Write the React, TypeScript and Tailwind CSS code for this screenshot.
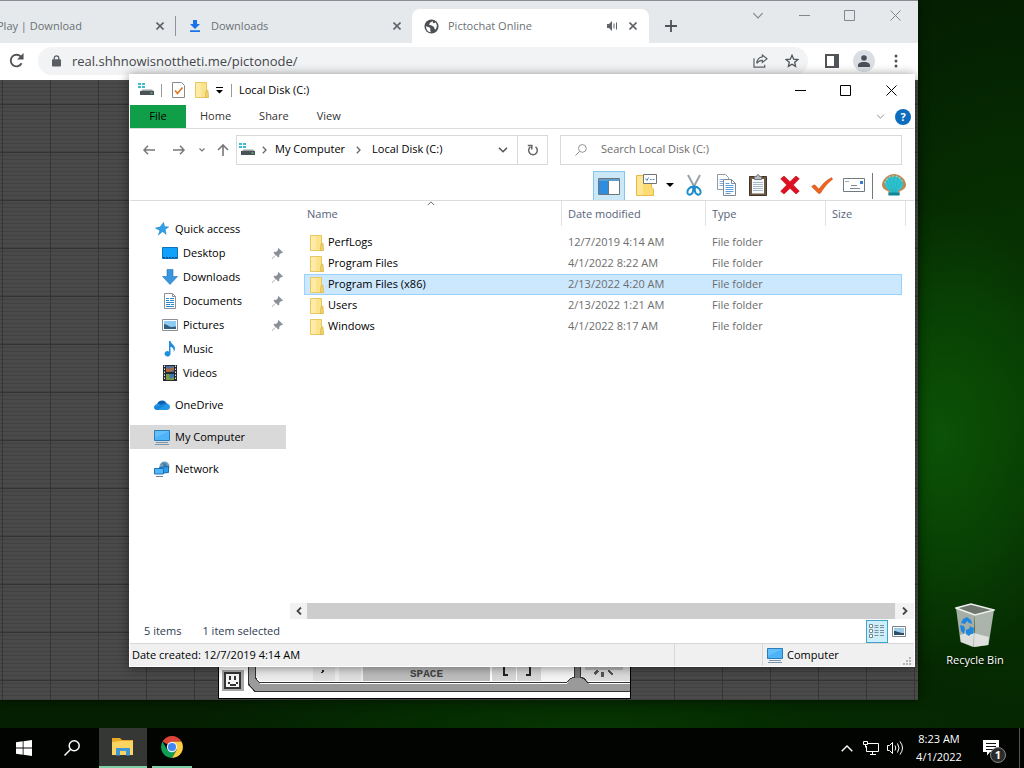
import { useState } from "react";
import type { ReactNode } from "react";

type IconProps = { className?: string };

/* ---------- small icons ---------- */

const CloseIcon = ({ className = "" }: IconProps) => (
  <svg viewBox="0 0 11 11" className={className} fill="none" stroke="currentColor">
    <path d="M.5.5l10 10M10.5.5l-10 10" />
  </svg>
);

const TabClose = () => (
  <svg viewBox="0 0 8 8" className="size-2" fill="none" stroke="#5f6368" strokeWidth="1.6">
    <path d="M.5.5l7 7M7.5.5l-7 7" />
  </svg>
);

const MinIcon = () => (
  <svg viewBox="0 0 11 11" className="size-[11px]" stroke="currentColor">
    <path d="M0 5.5h11" />
  </svg>
);

const MaxIcon = () => (
  <svg viewBox="0 0 11 11" className="size-[11px]" fill="none" stroke="currentColor">
    <path d="M.5.5h10v10H.5z" />
  </svg>
);

const Chevron = ({ className = "", d = "M1 1l4 4 4-4" }: { className?: string; d?: string }) => (
  <svg viewBox="0 0 10 6" className={className} fill="none" stroke="currentColor">
    <path d={d} />
  </svg>
);

const RightChevron = () => (
  <svg viewBox="0 0 5 8" className="h-2 w-[5px]" fill="none" stroke="#666" strokeWidth="1.3">
    <path d="M.8.8L4 4 .8 7.2" />
  </svg>
);

const DiskIcon = () => (
  <svg viewBox="0 0 16 14" className="h-[14px] w-4">
    <path fill="#3fbccb" d="M0 0h3v2H0zM4 0h3v2H4zM0 3h3v2H0zM4 3h3v2H4z" />
    <path fill="#9aa1a6" d="M3 8l1.500-1.500h9.500L15.500 8z" />
    <path fill="#4a5157" d="M2 8h14v4H2z" />
    <path fill="#6df08a" d="M12.500 9.500h2v1h-2z" />
  </svg>
);

const FolderIcon = () => (
  <svg viewBox="0 0 14 16" className="h-4 w-[14px] shrink-0">
    <path fill="#fbe38c" stroke="#e6c762" d="M.5.5h11v15H.5z" />
    <path fill="#ffeba6" d="M1 1h5v14H1z" />
    <path fill="#f3d56c" stroke="#dfbd52" d="M11 9l1.800-1 .7 7.500h-3z" />
  </svg>
);

const PinIcon = () => (
  <svg viewBox="0 0 11 11" className="size-[11px]" fill="#8a9097">
    <path d="M6.500 0L11 4.500 9.800 5.200 9 5 7.200 6.900 7.300 8.600 6.200 9.400 3.900 7.100.6 10.800 0 10.300 3.500 6.900 1.500 4.800 2.300 3.800 4.100 3.900 6 2 5.800 1.100z" />
  </svg>
);

const MonitorIcon = () => (
  <svg viewBox="0 0 16 16" className="size-4">
    <path fill="#4db5f7" stroke="#2a7dba" d="M.5 1.500h15v10H.5z" />
    <path fill="#7cccff" d="M1 2h14L1 9z" opacity=".5" />
    <path stroke="#7996ab" d="M2 13.500h12M1 15.500h14" />
  </svg>
);

const StarBlue = () => (
  <svg viewBox="0 0 14 14" className="size-[14px]">
    <path fill="#2ea1e8" stroke="#1a7fc4" strokeWidth=".6" d="M8.500.5l1 4.200 4.100.3-3.500 2.300 1 5-3.500-2.800-4.200 3.400L5 8.500.5 6l4.600-.9z" />
    <path stroke="#fff" strokeWidth=".7" d="M1 10.500h3M0 8.500h3" />
  </svg>
);

const DesktopIcon = () => (
  <svg viewBox="0 0 16 12" className="h-3 w-4">
    <path fill="#11a0fb" stroke="#0b74bf" d="M.5.5h15v11H.5z" />
    <path stroke="#0a4f86" d="M1 10.500h14" strokeDasharray="2 1" />
  </svg>
);

const DownIcon = () => (
  <svg viewBox="0 0 16 16" className="size-4">
    <path fill="#3a96dd" stroke="#2374b5" strokeWidth=".6" d="M5 .5h6v7h4.500L8 15.500.5 7.500H5z" />
  </svg>
);

const DocIcon = () => (
  <svg viewBox="0 0 12 16" className="h-4 w-3">
    <path fill="#fff" stroke="#8b9196" d="M.5.5h8l3 3v12H.5z" />
    <path fill="none" stroke="#8b9196" d="M8.500.5v3h3" />
    <path stroke="#2b8bd0" d="M2 5.500h3M6 5.500h4M2 7.500h3M6 7.500h4M2 9.500h8M2 11.500h4M7 11.500h3M2 13.500h8" />
  </svg>
);

const PictureIcon = () => (
  <svg viewBox="0 0 16 12" className="h-3 w-4">
    <path fill="#fff" stroke="#8b9196" d="M.5.5h15v11H.5z" />
    <path fill="#8fcdf2" d="M2 2h12v8H2z" />
    <path fill="#34617f" d="M2 5c3 0 4 2.500 7 3l5-.5V10H2z" />
  </svg>
);

const MusicIcon = () => (
  <svg viewBox="0 0 12 16" className="h-4 w-3">
    <path fill="#1f8fdd" d="M5 0h1.500c.5 3 4.500 4 4.500 7.500 0 1.500-.6 2.600-1.300 3.300.4-3-1-4.300-3.200-5V13a3 2.600 0 11-1.500-2.400z" />
  </svg>
);

const VideoIcon = () => (
  <svg viewBox="0 0 14 16" className="h-4 w-[14px]">
    <path fill="#262a30" d="M0 0h14v16H0z" />
    <path fill="#4d6fa0" d="M3 1h8v6H3z" />
    <path fill="#b46b37" d="M3 3l4 1 4-2v3l-5 2H3z" />
    <path fill="#7a9d3d" d="M3 9h8v6H3z" />
    <path fill="#3b78b8" d="M6 9h5v3l-4 2z" />
    <path stroke="#e8e8e8" strokeDasharray="1.500 1.500" d="M1.500 .5v15M12.500 .5v15" />
  </svg>
);

const CloudIcon = () => (
  <svg viewBox="0 0 16 10" className="h-[10px] w-4">
    <path fill="#0f5fb4" d="M3 4.500C3.500 1.800 6 .3 8.500.4c2 .1 3.300 1.300 4 3L8 8z" />
    <path fill="#2498e8" d="M2.800 10C-.8 9.800-.8 4.800 2.800 4c2-.4 3 .3 4.200 1.100l4-1.600c3.500-.6 5 1.500 5 3.500S14.500 10 12.800 10z" />
    <path fill="#1379d0" d="M7 5.100l4-1.600c1-.3 2-.1 2.600.2L3.500 10C1 9.800 0 8.500 0 7z" opacity=".55" />
  </svg>
);

const NetworkIcon = () => (
  <svg viewBox="0 0 16 16" className="size-4">
    <circle cx="10.500" cy="5.500" r="5" fill="#6e9fc2" />
    <path fill="#497e9f" d="M8 1.500l4 1 2 4-3 3z" />
    <path fill="#2f9bea" stroke="#186ba9" d="M5.500 6.500l9-1v6l-9 1z" />
    <path fill="#51b7fa" stroke="#1c74b6" d="M.5 7.500h9v5.500h-9z" />
    <path stroke="#6c8595" d="M2 15.500h7" />
  </svg>
);

/* ---------- explorer toolbar icons ---------- */

const PaneIcon = () => (
  <svg viewBox="0 0 22 17" className="h-[17px] w-[22px]">
    <path fill="#fff" stroke="#6c747c" d="M.5.5h21v16H.5z" />
    <path fill="#5f9fd0" d="M1 1h20v2H1z" />
    <path fill="#2f8de0" d="M1 3h9v13H1z" />
    <path stroke="#6c747c" d="M10.500 3v13" />
  </svg>
);

const FolderCardIcon = () => (
  <svg viewBox="0 0 22 22" className="size-[22px]">
    <path fill="#fbdb72" stroke="#e5bb45" d="M1.500 1.500h15v12l2 1.500v6.500h-17z" />
    <path fill="#ffe694" d="M2 2h6v19H2z" />
    <path fill="#fff" stroke="#6d747a" d="M8.500.5h13v9h-13z" />
    <path fill="none" stroke="#4886c8" d="M10.500 4.500l1.500 2 1.500-3M15 5.500h1.500M17.500 5.500h2" />
  </svg>
);

const ScissorsIcon = () => (
  <svg viewBox="0 0 16 22" className="h-[22px] w-4" fill="none">
    <path stroke="#9ba3aa" strokeWidth="2" d="M2 1l7.500 14M14 1L6.500 15" />
    <path stroke="#1b8ecb" strokeWidth="2" d="M7.500 12.500C3 13 1 16 1.500 19c1 3 5 1.500 5.500-1.500zM8.500 12.500c4.500.5 6.500 3.500 6 6.500-1 3-5 1.500-5.500-1.500z" />
  </svg>
);

const CopyIcon = () => (
  <svg viewBox="0 0 19 22" className="h-[22px] w-[19px]">
    <path fill="#fff" stroke="#8f9ba6" d="M.5.5h8l3 3v12H.5z" />
    <path stroke="#7fb0dc" d="M2.500 5.500h6M2.500 7.500h6M2.500 9.500h6M2.500 11.500h6" />
    <path fill="#fff" stroke="#7d8a96" d="M6.500 5.500h8l4 4v12h-12z" />
    <path fill="none" stroke="#7d8a96" d="M14.500 5.500v4h4" />
    <path stroke="#5b9fdc" d="M8.500 9.500h4M8.500 11.500h8M8.500 13.500h8M8.500 15.500h8M8.500 17.500h8M8.500 19.500h5" />
  </svg>
);

const ClipboardIcon = () => (
  <svg viewBox="0 0 18 22" className="h-[22px] w-[18px]">
    <path fill="#6d563f" stroke="#3f3427" d="M.5 2.500h17v19H.5z" />
    <path fill="#f7fafc" d="M3 5h12v14.500H3z" />
    <path stroke="#a9bac8" d="M4 8.500h10M4 10.500h10M4 12.500h10M4 14.500h10M4 16.500h10" />
    <path fill="#b9bec2" stroke="#6f757a" d="M5.500 2.500h2c0-2.500 3-2.500 3 0h2v3h-7z" />
  </svg>
);

const DeleteIcon = () => (
  <svg viewBox="0 0 20 20" className="size-5">
    <path fill="#dd1122" stroke="#b30d1a" strokeWidth=".6" d="M4 1l6 5.700L16 1l3.300 2.800L13.300 10l6 6.200L16 19l-6-5.700L4 19 .7 16.200l6-6.200-6-6.200z" />
  </svg>
);

const CheckIcon = () => (
  <svg viewBox="0 0 22 17" className="h-[17px] w-[22px]">
    <path fill="#f0641e" stroke="#c94a12" strokeWidth=".7" d="M.7 9.500L3.500 7.800 8 12.300C11 7.500 15 3.500 20.500.7l1 1.500C16.500 6 12.500 10.800 9.300 16.300H7.500z" />
  </svg>
);

const MailIcon = () => (
  <svg viewBox="0 0 22 15" className="h-[15px] w-[22px]">
    <path fill="#fff" stroke="#6e7a84" d="M.5.5h21v13H.5z" />
    <path fill="#2f7fd0" d="M17 3h3v3h-3z" />
    <path stroke="#a1abb3" d="M2 3.500h4" />
    <path stroke="#7c8892" d="M8 7.500h6M7 10.500h10" />
  </svg>
);

const ShellIcon = () => (
  <svg viewBox="0 0 24 22" className="h-[22px] w-6">
    <path fill="#b98a55" d="M12 0c3 0 5 1 7 2.500 3 2 5 5 5 8.500 0 2-1.500 4-3.500 5l-3 1.500v3.500h-11v-3.500l-3-1.500C1.500 15 0 13 0 11c0-3.500 2-6.500 5-8.500C7 1 9 0 12 0z" />
    <path fill="#2ec3cf" d="M12 2.500c5 0 9 3.500 9 8 0 3-3 5-5 6.500V20H8v-3c-2-1.500-5-3.500-5-6.500 0-4.500 4-8 9-8z" />
    <path fill="none" stroke="#22a9b8" strokeWidth=".6" d="M12 3v16M8 4l3 15M16 4l-3 15M4.500 7L10 18M19.500 7L14 18" />
    <path fill="none" stroke="#8be9ec" strokeWidth="1.200" strokeDasharray="1.500 2" d="M3 9c1-4 5-7 9-7s8 3 9 7" />
    <path fill="#0e8598" d="M6.500 18.500h11v3h-11z" />
  </svg>
);

/* ---------- browser window ---------- */

function WindowButtons({ dark }: { dark?: boolean }) {
  return (
    <div className={dark ? "ml-auto flex h-[30px] text-black" : "flex h-[28px] text-[#80868b]"}>
      <button aria-label="Minimize" className="grid w-[46px] place-items-center"><MinIcon /></button>
      <button aria-label="Maximize" className="grid w-[45px] place-items-center"><MaxIcon /></button>
      <button aria-label="Close" className="grid w-[46px] place-items-center"><CloseIcon className="size-[11px]" /></button>
    </div>
  );
}

function PictoKeyboard() {
  return (
    <div className="absolute bottom-px left-[218px] h-[60px] w-[413px] border border-black bg-white">
      <svg viewBox="0 0 411 34" className="absolute bottom-0 left-0 h-[34px] w-[411px]" shapeRendering="crispEdges">
        <path fill="#9a9a9a" d="M29 0h8v16l5 4h312l6-5 3 0 5 5h43v7H34l-5-5z" />
        <path fill="#ececec" d="M37 0h108v17H41l-4-4z" />
        <path fill="#dedede" d="M94 0h22v17H94zM120 0h22v17h-22z" />
        <path fill="#bdbdbd" d="M144 0h127v17H144z" />
        <path fill="#d7d7d7" d="M273 0h24v17h-24zM298 0h24v17h-24z" />
        <path fill="#f4f4f4" d="M322 0h32v14l-5 5h-27z" />
        <path fill="#dcdcdc" d="M362 0h49v17h-44l-5-5z" />
        <path fill="#b8b8b8" d="M366 0h38v6h-38z" />
        <path fill="#fff" d="M271 0h2v17h-2z" />
        <path fill="#9a9a9a" d="M348 20l3-5 4-2h9l4 3 2 4z" />
        <path fill="#777" d="M355 0h6v14h-6z" />
        <path fill="none" stroke="#333" d="M29.500 0v20l6 7H411M36.500 0v14l4 4.500h307l4-4 3.500-1V0M361.500 0v13l4 2 3 3.500H411" />
        <path fill="#222" d="M284 0h2v10h3v2h-5zM310 0h2v12h-5v-2h3zM104 0h1v2h-1zM103 6h2v2h-2zM102 8h2v1h-2z" />
        <path fill="#555" d="M374 9l4-3 2 1-4 4zM382 8h3v5h-3zM388 7l2-1 5 4-2 1z" />
        <path fill="#a8a8a8" d="M3 6h22v21H3z" />
        <path fill="#f5f5f5" stroke="#333" strokeWidth="2" d="M6 9h15v15H6z" />
        <path fill="#333" d="M10 12h2v4h-2zM15 12h2v4h-2zM9 18h2v2h6v-2h2v2h-2v2h-6v-2H9z" />
      </svg>
      <span className="absolute bottom-[17px] left-[191px] font-['Liberation_Mono',monospace] text-[11px] leading-[14px] font-bold text-[#444]">SPACE</span>
    </div>
  );
}

function Browser() {
  const [url, setUrl] = useState("real.shhnowisnottheti.me/pictonode/");
  return (
    <section className="absolute top-0 right-[106px] bottom-[28px] left-0 flex flex-col overflow-hidden border-t border-[#8d8b94] bg-white shadow-[0_0_8px_rgba(0,0,0,0.5)]">
      <div className="flex h-[42px] shrink-0 bg-[#e5e9ec] text-[#6b7075]">
        {/* first tab runs off the left side of the screen */}
        <div className="mt-[15px] mb-[7px] flex w-[176px] items-center border-r border-[#909498]">
          <span className="-ml-[3px] flex-1 whitespace-nowrap">Play | Download</span>
          <button aria-label="Close tab" className="mr-[11px]"><TabClose /></button>
        </div>
        <div className="mt-[15px] mb-[7px] flex w-[236px] items-center pl-[14px]">
          <svg viewBox="0 0 10 12" className="mr-[11px] h-3 w-[10px]" fill="#1a73e8">
            <path d="M3 0h4v4h3L5 9 0 4h3zM0 10.300h10V12H0z" />
          </svg>
          <span className="flex-1">Downloads</span>
          <button aria-label="Close tab" className="mr-[11px]"><TabClose /></button>
        </div>
        <div className="mt-2 flex w-[237px] items-center rounded-t-lg bg-white pl-3">
          <svg viewBox="0 0 16 16" className="mr-[9px] size-[15px]">
            <circle cx="8" cy="8" r="7.500" fill="#4c4f54" />
            <path fill="#fff" d="M2.200 7.500c1.500 1.500 3 .5 4.300 2 1 1.200-.5 2 .5 3.500l.3 1.200C4.300 14 2 11.500 2.200 7.500zM9 2.200c-1 .5-1 1.500-2.500 1.800-.8.300-.3 1.500-1 2.200.8 1 2.500.3 3.500 1.300s2 .5 2 2.500l1 1.500c2.500-2.500 2-6.500 0-8-.5.800-1.500 1.300-2.300.8z" />
          </svg>
          <span className="flex-1">Pictochat Online</span>
          <svg viewBox="0 0 11 10" className="mr-[11px] h-[10px] w-[11px]" fill="#5f6368">
            <path d="M0 3h2l3-3v10L2 7H0zM6.500 2.500h1v5h-1zM9 1.500h1v7H9z" />
          </svg>
          <button aria-label="Close tab" className="mr-[12px]"><TabClose /></button>
        </div>
        <button aria-label="New tab" className="mt-2 ml-4">
          <svg viewBox="0 0 12 12" className="size-3" stroke="#4f5358" strokeWidth="1.800"><path d="M6 0v12M0 6h12" /></svg>
        </button>
        <button aria-label="Search tabs" className="ml-auto grid h-[28px] w-[46px] place-items-center text-[#80868b]">
          <Chevron className="h-[7px] w-3" />
        </button>
        <WindowButtons />
      </div>

      <div className="flex h-[37px] shrink-0 items-center bg-white pr-[6px] pb-[2px] text-[#5f6368]">
        <button aria-label="Reload" className="grid w-[32px] place-items-center">
          <svg viewBox="0 0 16 16" className="size-[15px]" fill="none" stroke="#505459" strokeWidth="2">
            <path d="M13.500 11A6.200 6.200 0 1113 4.300" />
            <path fill="#505459" stroke="none" d="M15.500 0v7H8.500z" />
          </svg>
        </button>
        <div className="ml-[6px] flex h-7 flex-1 items-center rounded-full bg-[#f1f3f4] pl-[14px]">
          <svg viewBox="0 0 10 13" className="mr-[11px] h-3 w-[9px]">
            <path fill="none" stroke="#5a5d62" strokeWidth="1.400" d="M2.500 5V3.200a2.500 2.500 0 015 0V5" />
            <rect y="4.500" width="10" height="8" rx="1" fill="#5a5d62" />
          </svg>
          <input
            aria-label="Address"
            value={url}
            onChange={(e) => setUrl(e.target.value)}
            className="min-w-0 flex-1 bg-transparent text-[13px] leading-5 text-[#44474b] outline-none"
          />
          <button aria-label="Share" className="grid w-8 place-items-center">
            <svg viewBox="0 0 16 15" className="h-[14px] w-[15px]" fill="none" stroke="#5f6368" strokeWidth="1.300">
              <path d="M1 4.500V14h11.500v-2.500M10 1l5 4-5 4V6.800C7 6.800 5.300 8 4 10c.3-4 2.500-6.500 6-7z" />
            </svg>
          </button>
          <button aria-label="Bookmark" className="grid w-8 place-items-center">
            <svg viewBox="0 0 16 16" className="size-[14px]" fill="none" stroke="#505459" strokeWidth="1.500">
              <path d="M8 1.500l1.900 4.400 4.800.4-3.600 3.200 1 4.700L8 11.700l-4.100 2.500 1-4.700L1.300 6.300l4.800-.4z" />
            </svg>
          </button>
        </div>
        <button aria-label="Side panel" className="ml-2 grid w-8 place-items-center">
          <svg viewBox="0 0 14 14" className="size-[14px]"><path fill="none" stroke="#505459" strokeWidth="2" d="M1 1h12v12H1z" /><path fill="#505459" d="M9 0h5v14H9z" /></svg>
        </button>
        <button aria-label="Profile" className="mx-[5px] grid size-[22px] place-items-center rounded-full bg-[#dadfe6]">
          <svg viewBox="0 0 12 12" className="size-3" fill="#4b4f57"><circle cx="6" cy="3" r="2.800" /><path d="M0 12V9.500C1 7.500 3.500 7 6 7s5 .5 6 2.500V12z" /></svg>
        </button>
        <button aria-label="Menu" className="grid w-8 place-items-center">
          <svg viewBox="0 0 4 14" className="h-[14px] w-1" fill="#505459"><circle cx="2" cy="2" r="1.500" /><circle cx="2" cy="7" r="1.500" /><circle cx="2" cy="12" r="1.500" /></svg>
        </button>
      </div>

      {/* page: dark grid with the chat keyboard at the bottom */}
      <div className="relative flex-1 bg-[#4a4a4a] bg-[repeating-linear-gradient(90deg,transparent_0_2px,#363636_2px_3px,transparent_3px_48px),repeating-linear-gradient(180deg,transparent_0_24px,#333_24px_25px,transparent_25px_48px),repeating-linear-gradient(180deg,transparent_0_3px,#414141_3px_4px)]">
        <PictoKeyboard />
      </div>
    </section>
  );
}

/* ---------- explorer window ---------- */

const quickItems: { label: string; icon: ReactNode; pinned?: boolean }[] = [
  { label: "Desktop", icon: <DesktopIcon />, pinned: true },
  { label: "Downloads", icon: <DownIcon />, pinned: true },
  { label: "Documents", icon: <DocIcon />, pinned: true },
  { label: "Pictures", icon: <PictureIcon />, pinned: true },
  { label: "Music", icon: <MusicIcon /> },
  { label: "Videos", icon: <VideoIcon /> },
];

const files = [
  { name: "PerfLogs", date: "12/7/2019 4:14 AM" },
  { name: "Program Files", date: "4/1/2022 8:22 AM" },
  { name: "Program Files (x86)", date: "2/13/2022 4:20 AM" },
  { name: "Users", date: "2/13/2022 1:21 AM" },
  { name: "Windows", date: "4/1/2022 8:17 AM" },
];

const tools = [
  { label: "Cut", icon: <ScissorsIcon /> },
  { label: "Copy", icon: <CopyIcon /> },
  { label: "Paste", icon: <ClipboardIcon /> },
  { label: "Delete", icon: <DeleteIcon /> },
  { label: "Rename", icon: <CheckIcon /> },
  { label: "Properties", icon: <MailIcon /> },
];

function NavItem({ label, icon, active }: { label: string; icon: ReactNode; active?: boolean }) {
  return (
    <button className={`flex h-6 w-[156px] items-center pl-6 ${active ? "bg-[#d9d9d9]" : ""}`}>
      <span className="mr-[5px] grid w-4 place-items-center">{icon}</span>
      {label}
    </button>
  );
}

function Sidebar() {
  return (
    <nav className="flex w-[160px] shrink-0 flex-col gap-2 pt-4">
      <div>
        <NavItem label="Quick access" icon={<StarBlue />} />
        {quickItems.map((q) => (
          <button key={q.label} className="flex h-6 w-[156px] items-center pl-8">
            <span className="mr-[5px] grid w-4 place-items-center">{q.icon}</span>
            <span className="flex-1 text-left">{q.label}</span>
            {q.pinned && <span className="mr-[3px]"><PinIcon /></span>}
          </button>
        ))}
      </div>
      <NavItem label="OneDrive" icon={<CloudIcon />} />
      <NavItem label="My Computer" icon={<MonitorIcon />} active />
      <NavItem label="Network" icon={<NetworkIcon />} />
    </nav>
  );
}

function FileTable() {
  const [selected, setSelected] = useState("Program Files (x86)");
  const head = "h-[31px] p-0 pb-[6px] text-left font-normal text-[#56637a]";
  return (
    <table className="ml-[14px] w-[602px] table-fixed border-separate border-spacing-0">
      <colgroup>
        <col className="w-[258px]" />
        <col className="w-[144px]" />
        <col className="w-[120px]" />
        <col className="w-[76px]" />
        <col className="w-1" />
      </colgroup>
      <thead>
        <tr>
          <th className={head}>
            <div className="relative h-[25px] border-r border-[#e2e2e2] pl-[3px] leading-[25px]">
              Name
              <Chevron className="absolute top-0 right-[126px] h-[5px] w-2 text-[#444]" d="M1 5l4-4 4 4" />
            </div>
          </th>
          <th className={head}><div className="h-[25px] border-r border-[#e2e2e2] pl-[6px] leading-[25px]">Date modified</div></th>
          <th className={head}><div className="h-[25px] border-r border-[#e2e2e2] pl-[6px] leading-[25px]">Type</div></th>
          <th className={head} colSpan={2}><div className="h-[25px] border-r border-[#e2e2e2] pl-[6px] leading-[25px]">Size</div></th>
        </tr>
      </thead>
      <tbody className="text-[#6d6d6d]">
        {files.map((f) => {
          const on = f.name === selected;
          const cell = `h-[21px] border-y p-0 ${on ? "border-[#99d1ff] bg-[#cce8ff]" : "border-transparent"}`;
          return (
            <tr key={f.name} onClick={() => setSelected(f.name)}>
              <td className={`${cell} border-l pl-[5px]`}>
                <span className="flex h-[19px] items-center gap-1 text-black"><FolderIcon />{f.name}</span>
              </td>
              <td className={`${cell} pl-[6px]`}>{f.date}</td>
              <td className={`${cell} pl-[6px]`}>File folder</td>
              <td className={`${cell} border-r`} />
              <td className="p-0" />
            </tr>
          );
        })}
      </tbody>
    </table>
  );
}

function Explorer() {
  return (
    <section className="absolute top-[74px] right-[109px] bottom-[61px] left-[129px] flex flex-col bg-white p-px text-black shadow-[0_1px_10px_rgba(0,0,0,0.45)]">
      <header className="flex h-[30px] shrink-0 items-center pl-2">
        <DiskIcon />
        <span className="mx-[7px] h-[13px] border-l border-[#999]" />
        <button aria-label="Properties" className="ml-[3px]">
          <svg viewBox="0 0 13 16" className="h-4 w-[13px]">
            <path fill="#fff" stroke="#858b90" d="M.5.5h9l3 3v12H.5z" />
            <path fill="none" stroke="#e0761f" strokeWidth="1.600" d="M3 8.500l2.500 3 5-6" />
          </svg>
        </button>
        <button aria-label="New folder" className="ml-[10px]"><FolderIcon /></button>
        <button aria-label="Customize toolbar" className="ml-[7px]">
          <svg viewBox="0 0 7 7" className="size-[7px]"><path d="M0 0h7v1H0zM0 3h7L3.500 6.500z" /></svg>
        </button>
        <span className="ml-[8px] h-[13px] border-l border-[#999]" />
        <h1 className="ml-[7px] leading-4">Local Disk (C:)</h1>
        <WindowButtons dark />
      </header>

      <div className="flex h-6 shrink-0 border-b border-[#dcdcdc] text-[#333]">
        <button className="w-14 bg-[#119e49] text-black">File</button>
        <button className="px-[14px]">Home</button>
        <button className="px-[14px]">Share</button>
        <button className="px-[14px]">View</button>
        <button aria-label="Expand ribbon" className="ml-auto text-[#777]"><Chevron className="h-[5px] w-[9px]" /></button>
        <button aria-label="Help" className="mr-[3px] ml-[10px] size-4 self-center rounded-full bg-[#0d6cbd] leading-4 font-bold text-white">?</button>
      </div>

      <div className="flex h-[41px] shrink-0 items-center pr-3 text-[#777]">
        <button aria-label="Back" className="ml-[13px]">
          <svg viewBox="0 0 12 10" className="h-[10px] w-3" fill="none" stroke="currentColor" strokeWidth="1.500"><path d="M12 5H1M5 .8L1 5l4 4.200" /></svg>
        </button>
        <button aria-label="Forward" className="ml-[18px]">
          <svg viewBox="0 0 12 10" className="h-[10px] w-3" fill="none" stroke="currentColor" strokeWidth="1.500"><path d="M0 5h11M7 .8L11 5 7 9.200" /></svg>
        </button>
        <button aria-label="Recent locations" className="ml-[14px]">
          <svg viewBox="0 0 6 4" className="h-1 w-[6px]" fill="none" stroke="currentColor" strokeWidth="1.200"><path d="M.5.5L3 3 5.500.5" /></svg>
        </button>
        <button aria-label="Up" className="ml-3">
          <svg viewBox="0 0 12 12" className="size-3" fill="none" stroke="currentColor" strokeWidth="1.600"><path d="M6 12V1M1 6l5-5 5 5" /></svg>
        </button>
        <div className="ml-[7px] flex h-[30px] flex-1 items-center border border-[#d9d9d9] pl-[2px] text-black">
          <DiskIcon />
          <span className="mr-2 ml-[7px]"><RightChevron /></span>
          <button>My Computer</button>
          <span className="mx-[11px]"><RightChevron /></span>
          <button>Local Disk (C:)</button>
          <button aria-label="Previous locations" className="mr-[9px] ml-auto text-[#555]">
            <svg viewBox="0 0 10 6" className="h-[6px] w-[10px]" fill="none" stroke="currentColor" strokeWidth="1.600"><path d="M1 .7l4 4 4-4" /></svg>
          </button>
          <button aria-label="Refresh" className="grid h-full w-[30px] place-items-center border-l border-[#d9d9d9]">
            <svg viewBox="0 0 12 12" className="size-3" fill="none" stroke="#666" strokeWidth="1.500">
              <path d="M8.500 2.900A4.300 4.300 0 113.500 2.900M.8 1.500h4v4" />
            </svg>
          </button>
        </div>
        <label className="ml-3 flex h-[30px] w-[342px] items-center border border-[#d9d9d9] pl-[14px]">
          <svg viewBox="0 0 13 13" className="size-3" fill="none" stroke="#8a8a8a"><circle cx="8" cy="4.800" r="4.200" /><path d="M5 8L.5 12.500" /></svg>
          <input aria-label="Search" placeholder="Search Local Disk (C:)" className="ml-[14px] flex-1 text-[11px] outline-none placeholder:text-[#6d6d6d]" />
        </label>
      </div>

      <div className="flex h-[31px] shrink-0 items-center justify-end border-b border-[#dcdcdc] pr-[4px]">
        <button aria-label="Preview pane" className="grid h-[29px] w-8 place-items-center self-end border border-b-0 border-[#86c4ea] bg-[#cbe8f8]"><PaneIcon /></button>
        <button aria-label="Organize" className="ml-[10px] flex items-center gap-[9px]">
          <FolderCardIcon />
          <svg viewBox="0 0 8 4" className="h-1 w-2"><path d="M0 0h8L4 4z" /></svg>
        </button>
        <div className="ml-1 flex">
          {tools.map((t) => (
            <button key={t.label} aria-label={t.label} className="grid w-8 place-items-center">{t.icon}</button>
          ))}
        </div>
        <span className="mt-[2px] mr-[5px] ml-[2px] h-[26px] border-l border-[#777]" />
        <button aria-label="Classic shell settings" className="grid w-8 place-items-center"><ShellIcon /></button>
      </div>

      <div className="flex min-h-0 flex-1">
        <Sidebar />
        <main className="flex min-w-0 flex-1 flex-col">
          <div className="min-h-0 flex-1 overflow-hidden"><FileTable /></div>
          <div className="flex h-4 bg-[#f2f2f2] text-[#444]">
            <button aria-label="Scroll left" className="grid w-[17px] place-items-center">
              <svg viewBox="0 0 6 8" className="h-2 w-[6px]" fill="none" stroke="currentColor" strokeWidth="1.800"><path d="M5 .5L1.500 4 5 7.500" /></svg>
            </button>
            <div className="flex-1 bg-[#cdcdcd]" />
            <button aria-label="Scroll right" className="grid w-[19px] place-items-center">
              <svg viewBox="0 0 6 8" className="h-2 w-[6px]" fill="none" stroke="currentColor" strokeWidth="1.800"><path d="M1 .5L4.500 4 1 7.500" /></svg>
            </button>
          </div>
        </main>
      </div>

      <div className="flex h-6 shrink-0 items-center pl-[14px] text-[#2f3a52]">
        <span>5 items</span>
        <span className="ml-[21px]">1 item selected</span>
        <button aria-label="Details view" className="ml-auto grid h-[23px] w-[22px] place-items-center border border-[#3fa5c8] bg-[#cdeffb]">
          <svg viewBox="0 0 16 14" className="h-[14px] w-4" fill="none">
            <path fill="#fff" stroke="#7b858c" d="M.5.5h3v3h-3zM.5 5.500h3v3h-3zM.5 10.500h3v3h-3z" />
            <path stroke="#5b676f" d="M5.500 1.500h4M11 1.500h4M5.500 3.500h4M11 3.500h4M5.500 6.500h4M11 6.500h4M5.500 8.500h4M11 8.500h4M5.500 11.500h4M11 11.500h4" opacity=".7" />
          </svg>
        </button>
        <button aria-label="Large icons view" className="mr-2 ml-1">
          <svg viewBox="0 0 14 11" className="h-[11px] w-[14px]"><path fill="#fff" stroke="#7b858c" d="M.5.5h13v10H.5z" /><path fill="#9ccbe6" d="M2 2h10v7H2z" /><path fill="#2d4c66" d="M2 5c3 0 5 2 10 2v2H2z" /></svg>
        </button>
      </div>

      <footer className="flex h-[23px] shrink-0 items-center border-t border-[#d8d8d8] bg-[#f0f0f0]">
        <span className="flex-1 pl-[2px]">Date created: 12/7/2019 4:14 AM</span>
        <span className="h-full w-[88px] border-l border-[#d8d8d8]" />
        <span className="flex h-full w-[152px] items-center gap-1 border-l border-[#d8d8d8] pl-1">
          <MonitorIcon />
          Computer
          <svg viewBox="0 0 9 9" className="mr-[2px] ml-auto size-[9px] self-end" fill="#b4b4b4">
            <path d="M6 0h2v2H6zM3 3h2v2H3zM6 3h2v2H6zM0 6h2v2H0zM3 6h2v2H3zM6 6h2v2H6z" />
          </svg>
        </span>
      </footer>
    </section>
  );
}

/* ---------- desktop ---------- */

function RecycleBin() {
  return (
    <button className="absolute top-[602px] right-[12px] flex w-[74px] flex-col items-center text-white">
      <svg viewBox="0 0 40 46" className="h-[46px] w-10">
        <path fill="#b8bcb8" d="M1 6l4.500 34L18 45l2-33z" opacity=".9" />
        <path fill="#d4d6d4" d="M39 8l-5.500 35L19 45 20 12z" opacity=".8" />
        <path fill="#6f776f" d="M1 6l15-4 23 6-19 5z" />
        <path fill="none" stroke="#eef0ee" strokeWidth="1.500" d="M1 6l15-4 23 6-19 5z" />
        <path fill="#f3f3f3" d="M5 33l10-3 19 5-1 8-14 2L6 40z" opacity=".7" />
        <path fill="#1f87dd" d="M8 17l4-2 4 3 1 4-3-1-2-2-2 3-4-1zM5 23l4 1 1 3-1 5-3-3zM11 28l4-2-1-2 5 2-1 6-2 0-2 2-3-2z" />
      </svg>
      <span className="mt-1 leading-4 whitespace-nowrap [text-shadow:0_1px_2px_#000]">Recycle Bin</span>
    </button>
  );
}

function Taskbar() {
  return (
    <footer className="flex h-10 shrink-0 items-stretch bg-[#020402] text-white">
      <button aria-label="Start" className="grid w-12 place-items-center">
        <svg viewBox="0 0 16 16" className="size-4" fill="#fff"><path d="M0 2.300L6.700 1.300v6.300H0zM7.500 1.200L16 0v7.600H7.500zM0 8.400h6.700v6.300L0 13.700zM7.500 8.400H16V16l-8.500-1.200z" /></svg>
      </button>
      <button aria-label="Search" className="grid w-12 place-items-center">
        <svg viewBox="0 0 16 16" className="size-4" fill="none" stroke="#fff" strokeWidth="1.500"><circle cx="10.200" cy="5.800" r="5" /><path d="M6.700 9.300L.5 15.500" /></svg>
      </button>
      <button aria-label="File Explorer" className="ml-[3px] grid w-12 place-items-center border-b-2 border-[#7fcfa6] bg-[#353735]">
        <svg viewBox="0 0 22 18" className="h-[18px] w-[22px]">
          <path fill="#e9a825" d="M0 0h8l2 2h11v4H0z" />
          <path fill="#fcd462" d="M0 4l8-1h13v14H0z" />
          <path fill="#3f97d3" d="M4 10h14v7.500h-4V13H8v4.500H4z" />
          <path fill="#fcd462" d="M9 13h4v2H9z" />
        </svg>
      </button>
      <button aria-label="Google Chrome" className="mx-[5px] grid w-10 place-items-center border-b-2 border-[#7fcfa6]">
        <svg viewBox="0 0 22 22" className="size-[22px]">
          <path fill="#db4437" d="M11 11L1.500 5.500A11 11 0 0120.500 5.500H11z" />
          <path fill="#0f9d58" d="M1.500 5.500A11 11 0 0011 22l4.800-8.300H6.200z" />
          <path fill="#ffcd40" d="M20.500 5.500A11 11 0 0111 22l4.800-8.300L11 5.500z" />
          <circle cx="11" cy="11" r="5.200" fill="#f1f1f1" />
          <circle cx="11" cy="11" r="4" fill="#4285f4" />
        </svg>
      </button>

      <div className="ml-auto flex items-center">
        <button aria-label="Show hidden icons" className="grid w-6 place-items-center">
          <svg viewBox="0 0 12 7" className="h-[7px] w-3" fill="none" stroke="#fff" strokeWidth="1.400"><path d="M.7 6.300L6 1l5.300 5.300" /></svg>
        </button>
        <button aria-label="Network" className="grid w-6 place-items-center">
          <svg viewBox="0 0 16 14" className="h-[14px] w-4" fill="none" stroke="#fff"><path d="M5 2.500h10.500v8H3.500V5M7 13.500h6M9.500 10.500v3M.5.500h4v3h-4zM2.500 3.500v3" /></svg>
        </button>
        <button aria-label="Volume" className="grid w-6 place-items-center">
          <svg viewBox="0 0 17 14" className="h-[14px] w-[17px]" fill="none" stroke="#fff"><path d="M.5 4.500h2l3-3v11l-3-3h-2zM8 4.500q1.500 2.500 0 5M10.500 2.500q3 4.500 0 9M13 .5q5 6.500 0 13" /></svg>
        </button>
        <div className="ml-[5px] w-[54px] text-center leading-[18px] whitespace-nowrap">
          <div>8:23 AM</div>
          <div>4/1/2022</div>
        </div>
        <button aria-label="1 new notification" className="relative ml-[17px] h-10 w-[36px]">
          <svg viewBox="0 0 16 16" className="absolute top-3 left-0 size-4"><path fill="#fff" d="M0 0h16v12H7l-3 3.500V12H0z" /><path stroke="#111" d="M3 3.500h10M3 6.500h10M3 9.500h7" /></svg>
          <span className="absolute top-[19px] left-[7px] size-4 rounded-full border border-[#888] bg-[#2b2b2b] leading-[14px] font-bold">1</span>
        </button>
        <span className="mr-1 h-full border-l border-[#555]" />
      </div>
    </footer>
  );
}

export default function App() {
  return (
    <div className="flex h-screen min-h-[600px] flex-col overflow-hidden bg-black font-['Open_Sans','Noto_Sans',sans-serif] text-[11px]">
      <div className="relative flex-1 bg-[#041f01] bg-[radial-gradient(ellipse_130px_230px_at_92%_60%,#0b5206_0%,transparent_100%),radial-gradient(ellipse_300px_420px_at_100%_56%,#083c03_0%,transparent_100%),radial-gradient(ellipse_420px_60px_at_58%_100%,#063602_0%,transparent_100%)]">
        <Browser />
        <Explorer />
        <RecycleBin />
      </div>
      <Taskbar />
    </div>
  );
}
